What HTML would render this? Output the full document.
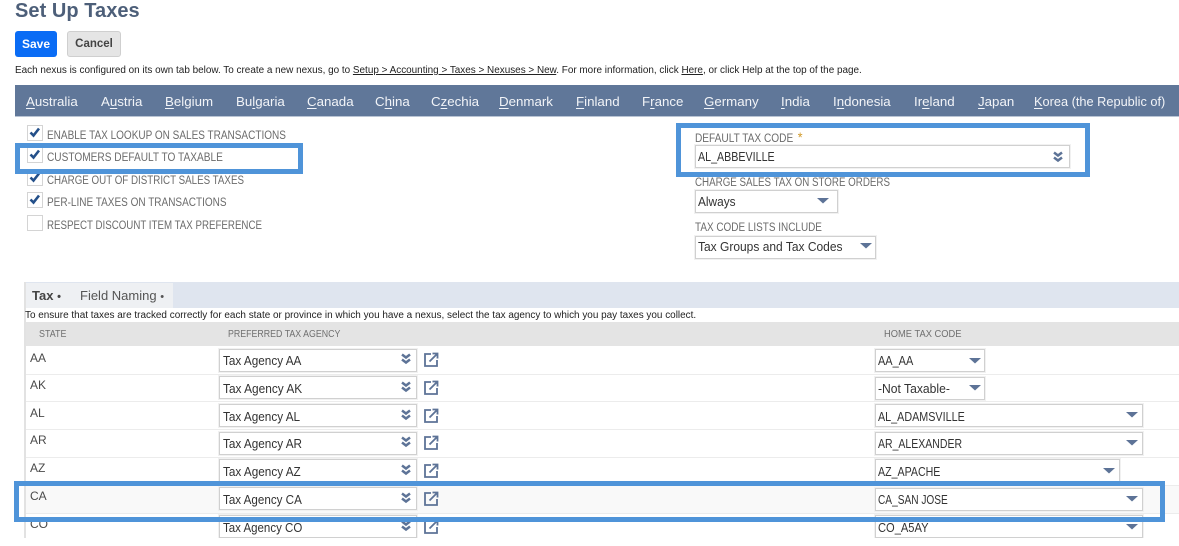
<!DOCTYPE html>
<html>
<head>
<meta charset="utf-8">
<style>
html,body{margin:0;padding:0;background:#fff}
#p{position:relative;width:1179px;height:546px;overflow:hidden;background:#fff;font-family:"Liberation Sans","DejaVu Sans",sans-serif;color:#444}
#p div{position:absolute;white-space:nowrap;transform-origin:left center}
.tb{top:94px;font-size:13.3px;line-height:16px;color:#f2f4f8}
.tb u{text-decoration-thickness:1px;text-underline-offset:2px}
.l{font-size:11.5px;color:#6b6b6b;line-height:14px}
.h{font-size:10.5px;color:#707070;line-height:14px;top:327px}
.cb{width:14px;height:14px;border:1px solid #d4d4d4;background:#fff;left:27px}
.v{font-size:12.5px;color:#333;line-height:14px}
.st{font-size:12px;color:#4a4a4a;left:30px;line-height:14px}
.in{background:#fff;border:1px solid #d0d0d0;box-sizing:border-box;height:23px;box-shadow:0 0 0 1px #f1f1f1}
.ico{position:absolute}
.sep{left:26px;right:0;height:1px;background:#ececec}
.box{border:5px solid #4f94d9;box-sizing:border-box}
.l,.h,.v,.st,.tb,.x{filter:blur(.3px)}
</style>
</head>
<body>
<div id="p">
<div class="x" style="left:15px;top:-1px;font-size:20px;font-weight:bold;color:#4d5f79;line-height:24px;letter-spacing:.05px">Set Up Taxes</div>
<div style="left:15px;top:31px;width:42px;height:26px;background:#0a6cf5;border-radius:3px"></div>
<div class="x" style="left:15px;top:31px;width:42px;color:#fff;font-size:12px;font-weight:bold;text-align:center;line-height:27px">Save</div>
<div style="left:67px;top:31px;width:54px;height:26px;box-sizing:border-box;background:#e5e5e5;border:1px solid #cfcfcf;border-radius:3px"></div>
<div class="x" style="left:67px;top:31px;width:54px;color:#444;font-size:11.5px;font-weight:bold;text-align:center;line-height:27px">Cancel</div>
<div class="x" style="left:15px;top:64px;font-size:9.93px;line-height:14px;color:#222">Each nexus is configured on its own tab below. To create a new nexus, go to <u>Setup &gt; Accounting &gt; Taxes &gt; Nexuses &gt; New</u>. For more information, click <u>Here</u>, or click Help at the top of the page.</div>

<div style="left:15px;top:85px;width:1164px;height:31px;background:#607799;border-bottom:1px solid #b9c4d4"></div>
<div class="tb" style="left:26px"><u>A</u>ustralia</div>
<div class="tb" style="left:101px">A<u>u</u>stria</div>
<div class="tb" style="left:165px"><u>B</u>elgium</div>
<div class="tb" style="left:236px">Bu<u>l</u>garia</div>
<div class="tb" style="left:307px"><u>C</u>anada</div>
<div class="tb" style="left:375px">C<u>h</u>ina</div>
<div class="tb" style="left:431px">C<u>z</u>echia</div>
<div class="tb" style="left:499px"><u>D</u>enmark</div>
<div class="tb" style="left:576px"><u>F</u>inland</div>
<div class="tb" style="left:642px">F<u>r</u>ance</div>
<div class="tb" style="left:704px"><u>G</u>ermany</div>
<div class="tb" style="left:781px"><u>I</u>ndia</div>
<div class="tb" style="left:833px">I<u>n</u>donesia</div>
<div class="tb" style="left:914px">Ir<u>e</u>land</div>
<div class="tb" style="left:978px"><u>J</u>apan</div>
<div class="tb" style="left:1034px;transform:scaleX(.96)"><u>K</u>orea (the Republic of)</div>

<div class="cb" style="top:125px"></div>
<div class="cb" style="top:147px"></div>
<div class="cb" style="top:170px"></div>
<div class="cb" style="top:192px"></div>
<div class="cb" style="top:215px"></div>
<svg class="ico" style="left:27px;top:125px" width="16" height="90" viewBox="0 0 16 90" fill="none" stroke="#24508a" stroke-width="2.6"><path d="M3.500 7.500L6.500 10.500L12 3.500"/><path d="M3.500 29.500L6.500 32.500L12 25.500"/><path d="M3.500 52.500L6.500 55.500L12 48.500"/><path d="M3.500 74.500L6.500 77.500L12 70.500"/></svg>
<div class="l" style="left:47px;top:129px;transform:scaleX(.87)">ENABLE TAX LOOKUP ON SALES TRANSACTIONS</div>
<div class="l" style="left:47px;top:151px;transform:scaleX(.88)">CUSTOMERS DEFAULT TO TAXABLE</div>
<div class="l" style="left:47px;top:174px;transform:scaleX(.85)">CHARGE OUT OF DISTRICT SALES TAXES</div>
<div class="l" style="left:47px;top:196px;transform:scaleX(.87)">PER-LINE TAXES ON TRANSACTIONS</div>
<div class="l" style="left:47px;top:219px;transform:scaleX(.846)">RESPECT DISCOUNT ITEM TAX PREFERENCE</div>

<div class="l" style="left:695px;top:130px;transform:scaleX(.88)">DEFAULT TAX CODE <span style="color:#d19a2a;font-size:14px;margin-left:2px">*</span></div>
<div class="in" style="left:695px;top:145px;width:375px"></div>
<div class="v" style="left:698px;top:150px;transform:scaleX(.855)">AL_ABBEVILLE</div>
<div class="l" style="left:695px;top:176px;transform:scaleX(.85)">CHARGE SALES TAX ON STORE ORDERS</div>
<div class="in" style="left:695px;top:190px;width:143px"></div>
<div class="v" style="left:698px;top:195px;transform:scaleX(.95)">Always</div>
<div class="l" style="left:695px;top:221px;transform:scaleX(.865)">TAX CODE LISTS INCLUDE</div>
<div class="in" style="left:695px;top:236px;width:181px"></div>
<div class="v" style="left:698px;top:240px;transform:scaleX(.96)">Tax Groups and Tax Codes</div>

<svg class="ico" style="left:0;top:0" width="1179" height="546" fill="#5d7397">
<defs>
<g id="dd"><path d="M0 0H12L6 5.500Z"/></g>
<g id="dc" fill="none" stroke="#5d7397" stroke-width="2.500"><path d="M1 0.500L5 3.500L9 0.500"/><path d="M1 5.500L5 8.500L9 5.500"/></g>
<g id="ex" fill="none" stroke="#5d7397" stroke-width="1.800"><path d="M7 2H1V14H13V8"/><path d="M5.500 9.500L13 2M8.500 1.500H13.500V6.500"/></g>
</defs>
<use href="#dc" x="1053" y="152"/>
<use href="#dd" x="817" y="198"/>
<use href="#dd" x="860" y="243"/>
</svg>

<div style="left:24px;top:282px;width:1155px;height:26px;background:#dfe5ef"></div>
<div style="left:25px;top:283px;width:148px;height:25px;background:#eef0f3"></div>
<div class="x" style="left:32px;top:288px;font-size:13px;font-weight:bold;color:#444;line-height:16px">Tax <span style="font-size:11px">•</span></div>
<div class="x" style="left:80px;top:288px;font-size:13px;color:#555;line-height:16px">Field Naming <span style="font-size:11px">•</span></div>
<div style="left:24px;top:282px;width:2px;height:256px;background:#e2e2e2"></div>
<div class="x" style="left:25px;top:309px;font-size:9.95px;line-height:13px;color:#222">To ensure that taxes are tracked correctly for each state or province in which you have a nexus, select the tax agency to which you pay taxes you collect.</div>
<div style="left:26px;top:322px;width:1153px;height:24px;background:#e4e4e4"></div>
<div class="h" style="left:39px;transform:scaleX(.85)">STATE</div>
<div class="h" style="left:228px;transform:scaleX(.84)">PREFERRED TAX AGENCY</div>
<div class="h" style="left:884px;transform:scaleX(.89)">HOME TAX CODE</div>

<div class="sep" style="top:374px"></div>
<div class="sep" style="top:401px"></div>
<div class="sep" style="top:429px"></div>
<div class="sep" style="top:457px"></div>
<div class="sep" style="top:485px"></div>
<div style="left:26px;top:486px;width:1153px;height:27px;background:#f9f9f9"></div>
<div class="sep" style="top:513px"></div>

<div class="st" style="top:351px">AA</div>
<div class="st" style="top:378px">AK</div>
<div class="st" style="top:406px">AL</div>
<div class="st" style="top:433px">AR</div>
<div class="st" style="top:461px">AZ</div>
<div class="st" style="top:489px">CA</div>
<div class="st" style="top:517px">CO</div>

<div class="in" style="left:219px;top:349px;width:198px"></div>
<div class="in" style="left:219px;top:376px;width:198px"></div>
<div class="in" style="left:219px;top:404px;width:198px"></div>
<div class="in" style="left:219px;top:432px;width:198px"></div>
<div class="in" style="left:219px;top:459px;width:198px"></div>
<div class="in" style="left:219px;top:487px;width:198px"></div>
<div class="in" style="left:219px;top:515px;width:198px"></div>

<div class="v" style="left:223px;top:354px;transform:scaleX(.94)">Tax Agency AA</div>
<div class="v" style="left:223px;top:382px;transform:scaleX(.95)">Tax Agency AK</div>
<div class="v" style="left:223px;top:410px;transform:scaleX(.94)">Tax Agency AL</div>
<div class="v" style="left:223px;top:437px;transform:scaleX(.94)">Tax Agency AR</div>
<div class="v" style="left:223px;top:465px;transform:scaleX(.94)">Tax Agency AZ</div>
<div class="v" style="left:223px;top:493px;transform:scaleX(.93)">Tax Agency CA</div>
<div class="v" style="left:223px;top:521px;transform:scaleX(.92)">Tax Agency CO</div>

<div class="in" style="left:875px;top:349px;width:110px"></div>
<div class="in" style="left:875px;top:377px;width:110px"></div>
<div class="in" style="left:875px;top:404px;width:268px"></div>
<div class="in" style="left:875px;top:432px;width:268px"></div>
<div class="in" style="left:875px;top:459px;width:245px"></div>
<div class="in" style="left:875px;top:488px;width:268px"></div>
<div class="in" style="left:875px;top:515px;width:268px"></div>

<div class="v" style="left:878px;top:354px;transform:scaleX(.875)">AA_AA</div>
<div class="v" style="left:878px;top:382px;transform:scaleX(.97)">-Not Taxable-</div>
<div class="v" style="left:878px;top:410px;transform:scaleX(.861)">AL_ADAMSVILLE</div>
<div class="v" style="left:878px;top:437px;transform:scaleX(.84)">AR_ALEXANDER</div>
<div class="v" style="left:878px;top:465px;transform:scaleX(.85)">AZ_APACHE</div>
<div class="v" style="left:878px;top:493px;transform:scaleX(.81)">CA_SAN JOSE</div>
<div class="v" style="left:878px;top:521px;transform:scaleX(.89)">CO_A5AY</div>

<svg class="ico" style="left:0;top:0" width="1179" height="546" fill="#5d7397">
<use href="#dc" x="401" y="354"/><use href="#dc" x="401" y="382"/><use href="#dc" x="401" y="410"/><use href="#dc" x="401" y="437"/><use href="#dc" x="401" y="465"/><use href="#dc" x="401" y="493"/><use href="#dc" x="401" y="521"/>
<use href="#ex" x="424" y="352"/><use href="#ex" x="424" y="380"/><use href="#ex" x="424" y="408"/><use href="#ex" x="424" y="435"/><use href="#ex" x="424" y="463"/><use href="#ex" x="424" y="491"/><use href="#ex" x="424" y="519"/>
<use href="#dd" x="969" y="358"/><use href="#dd" x="969" y="385"/><use href="#dd" x="1126" y="412"/><use href="#dd" x="1126" y="440"/><use href="#dd" x="1103" y="468"/><use href="#dd" x="1126" y="496"/><use href="#dd" x="1126" y="524"/>
</svg>

<div style="left:0;top:538px;width:1179px;height:8px;background:#fff"></div>
<div class="box" style="left:15px;top:143px;width:288px;height:31px"></div>
<div class="box" style="left:676px;top:123px;width:414px;height:54px"></div>
<div class="box" style="left:14px;top:481px;width:1151px;height:41px"></div>
</div>
</body>
</html>
